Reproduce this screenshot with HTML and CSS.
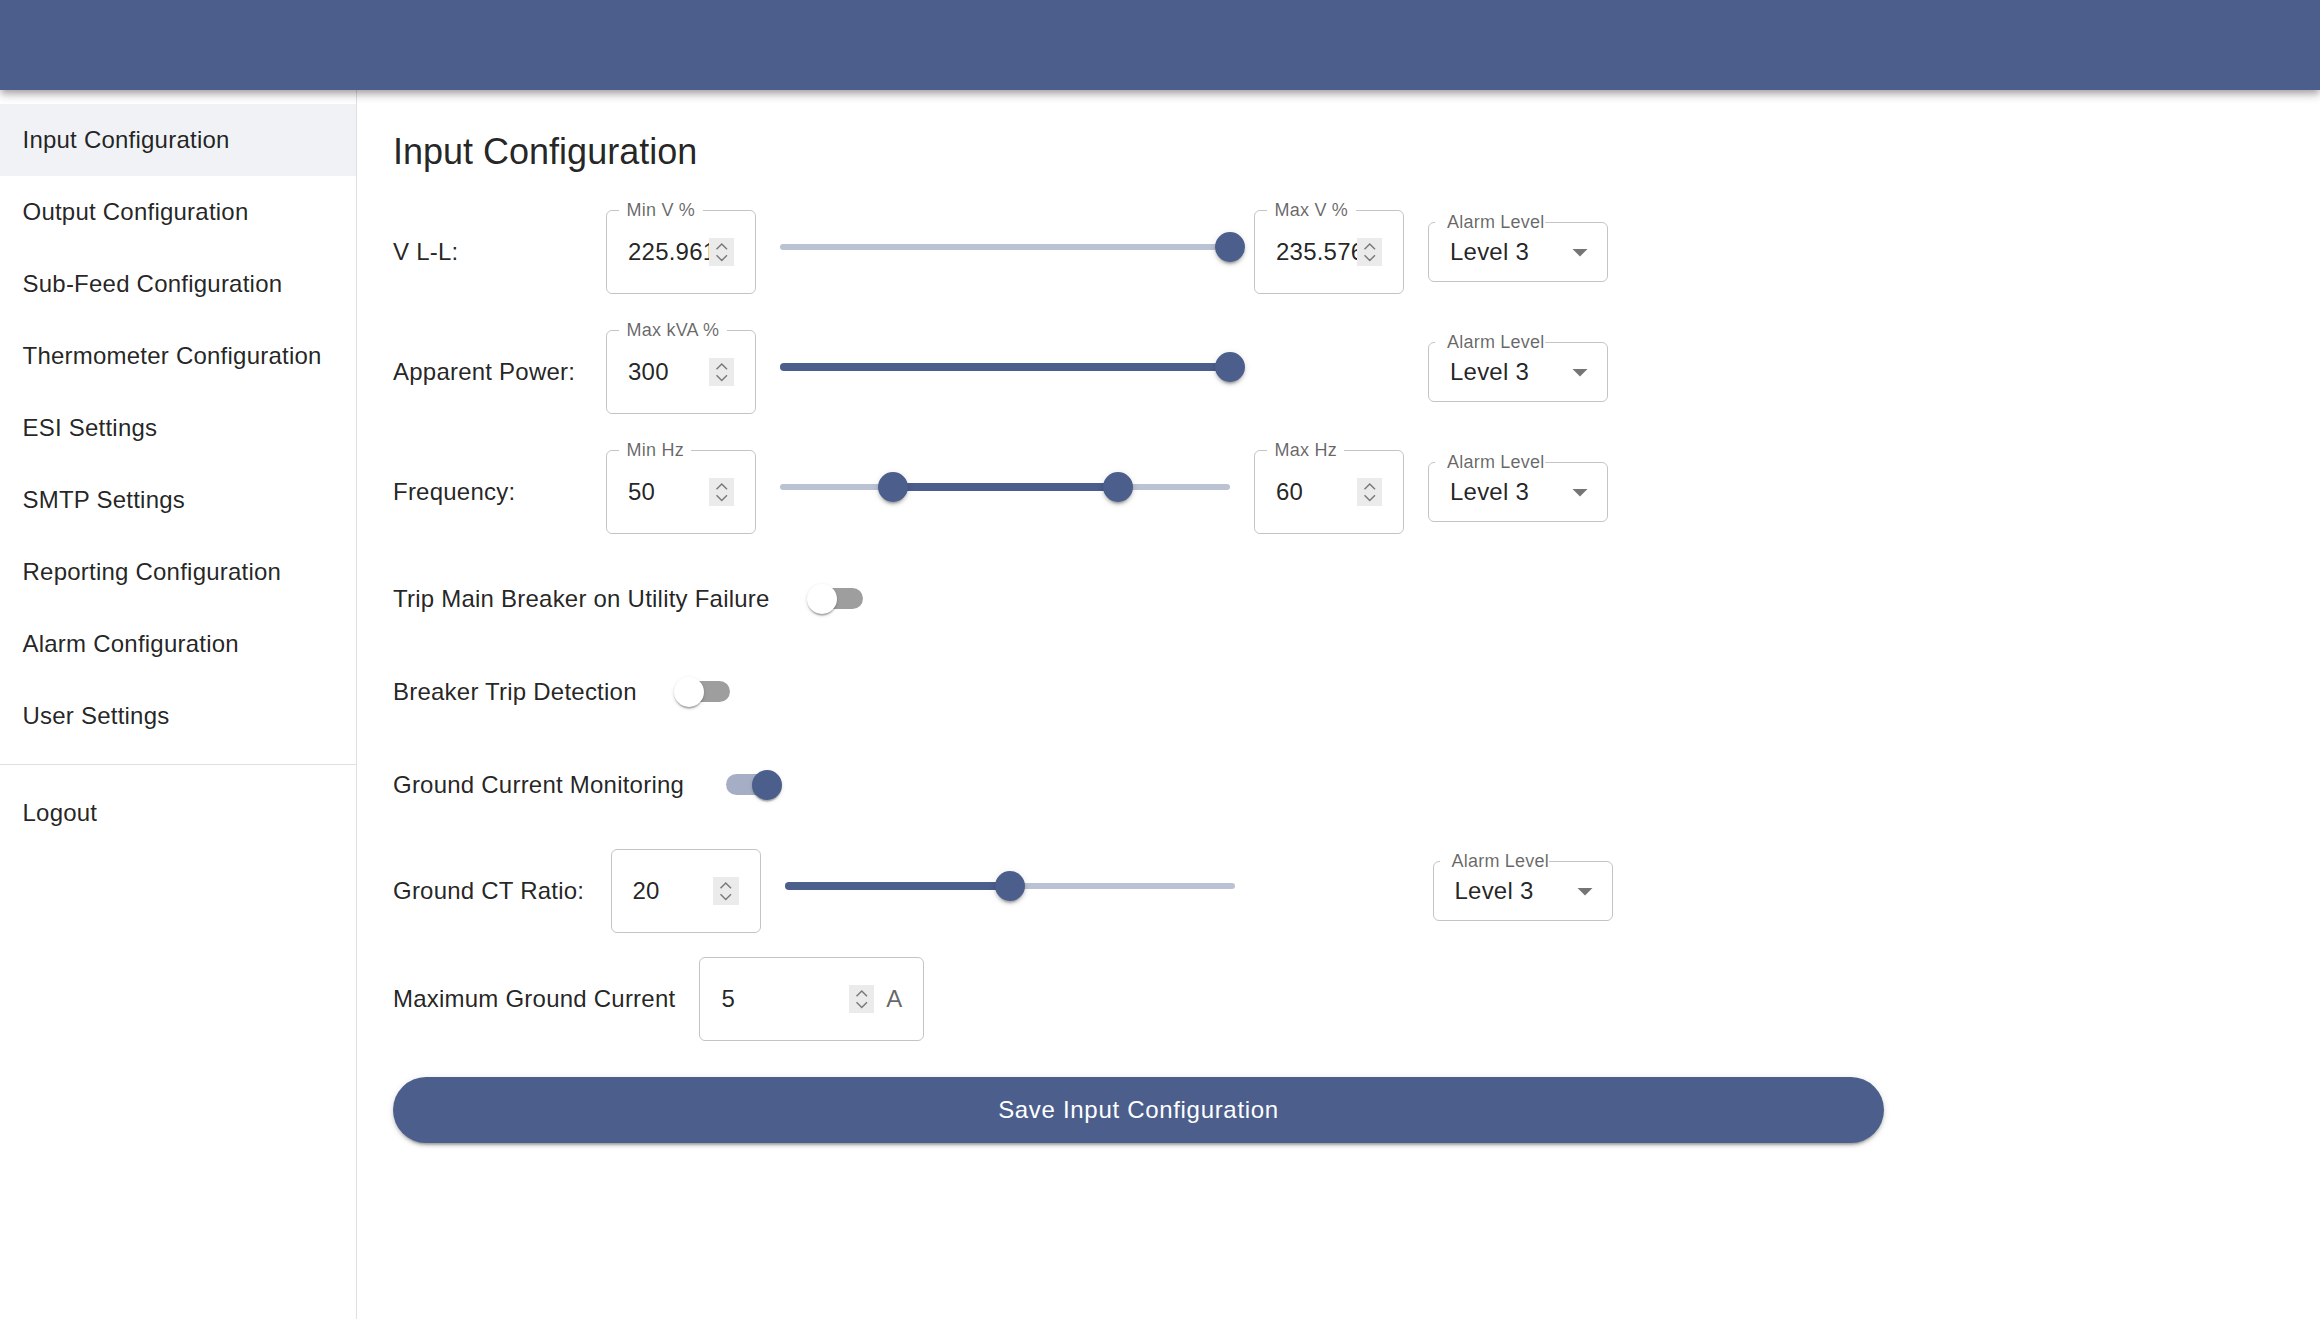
FILE: index.html
```html
<!DOCTYPE html>
<html lang="en">
<head>
<meta charset="utf-8">
<title>Input Configuration</title>
<link rel="stylesheet" href="styles.css">
</head>
<body>
<header class="appbar"></header>
<div class="layout">
  <nav class="sidebar">
    <ul class="nav-list">
      <li class="nav-item is-selected">Input Configuration</li>
      <li class="nav-item">Output Configuration</li>
      <li class="nav-item">Sub-Feed Configuration</li>
      <li class="nav-item">Thermometer Configuration</li>
      <li class="nav-item">ESI Settings</li>
      <li class="nav-item">SMTP Settings</li>
      <li class="nav-item">Reporting Configuration</li>
      <li class="nav-item">Alarm Configuration</li>
      <li class="nav-item">User Settings</li>
    </ul>
    <hr class="nav-divider">
    <ul class="nav-list">
      <li class="nav-item">Logout</li>
    </ul>
  </nav>
  <main class="content">
    <h1 class="page-title">Input Configuration</h1>
    <div class="form">

      <div class="slider-row">
        <span class="row-label">V L-L:</span>
        <div class="field">
          <span class="field-label">Min V %</span>
          <span class="field-value">225.96178</span>
          <span class="spinner"><svg viewBox="0 0 17 19" width="17" height="19"><path d="M5 7.5L8.5 4L12 7.5M5 11.5L8.5 15L12 11.5"/></svg></span>
        </div>
        <div class="slider">
          <span class="slider-rail"></span>
          <span class="slider-thumb" style="left:100%"></span>
        </div>
        <div class="field">
          <span class="field-label">Max V %</span>
          <span class="field-value">235.57643</span>
          <span class="spinner"><svg viewBox="0 0 17 19" width="17" height="19"><path d="M5 7.5L8.5 4L12 7.5M5 11.5L8.5 15L12 11.5"/></svg></span>
        </div>
        <div class="select">
          <span class="select-label">Alarm Level</span>
          <span class="select-value">Level 3</span>
          <svg class="select-arrow" viewBox="0 0 24 24"><path d="M7 10l5 5 5-5z"/></svg>
        </div>
      </div>

      <div class="slider-row">
        <span class="row-label">Apparent Power:</span>
        <div class="field">
          <span class="field-label">Max kVA %</span>
          <span class="field-value">300</span>
          <span class="spinner"><svg viewBox="0 0 17 19" width="17" height="19"><path d="M5 7.5L8.5 4L12 7.5M5 11.5L8.5 15L12 11.5"/></svg></span>
        </div>
        <div class="slider">
          <span class="slider-rail"></span>
          <span class="slider-track" style="left:0%;width:100%"></span>
          <span class="slider-thumb" style="left:100%"></span>
        </div>
        <div class="empty-slot"></div>
        <div class="select">
          <span class="select-label">Alarm Level</span>
          <span class="select-value">Level 3</span>
          <svg class="select-arrow" viewBox="0 0 24 24"><path d="M7 10l5 5 5-5z"/></svg>
        </div>
      </div>

      <div class="slider-row">
        <span class="row-label">Frequency:</span>
        <div class="field">
          <span class="field-label">Min Hz</span>
          <span class="field-value">50</span>
          <span class="spinner"><svg viewBox="0 0 17 19" width="17" height="19"><path d="M5 7.5L8.5 4L12 7.5M5 11.5L8.5 15L12 11.5"/></svg></span>
        </div>
        <div class="slider">
          <span class="slider-rail"></span>
          <span class="slider-track" style="left:25%;width:50%"></span>
          <span class="slider-thumb" style="left:25%"></span>
          <span class="slider-thumb" style="left:75%"></span>
        </div>
        <div class="field">
          <span class="field-label">Max Hz</span>
          <span class="field-value">60</span>
          <span class="spinner"><svg viewBox="0 0 17 19" width="17" height="19"><path d="M5 7.5L8.5 4L12 7.5M5 11.5L8.5 15L12 11.5"/></svg></span>
        </div>
        <div class="select">
          <span class="select-label">Alarm Level</span>
          <span class="select-value">Level 3</span>
          <svg class="select-arrow" viewBox="0 0 24 24"><path d="M7 10l5 5 5-5z"/></svg>
        </div>
      </div>

      <div class="switch-row">
        <span class="row-label">Trip Main Breaker on Utility Failure</span>
        <span class="switch"><span class="switch-track"></span><span class="switch-thumb"></span></span>
      </div>

      <div class="switch-row">
        <span class="row-label">Breaker Trip Detection</span>
        <span class="switch"><span class="switch-track"></span><span class="switch-thumb"></span></span>
      </div>

      <div class="switch-row">
        <span class="row-label">Ground Current Monitoring</span>
        <span class="switch is-on"><span class="switch-track"></span><span class="switch-thumb"></span></span>
      </div>

      <div class="ground-group">
        <div class="slider-row slider-row--wide">
          <span class="row-label">Ground CT Ratio:</span>
          <div class="field">
            <span class="field-value">20</span>
            <span class="spinner"><svg viewBox="0 0 17 19" width="17" height="19"><path d="M5 7.5L8.5 4L12 7.5M5 11.5L8.5 15L12 11.5"/></svg></span>
          </div>
          <div class="slider">
            <span class="slider-rail"></span>
            <span class="slider-track" style="left:0%;width:50%"></span>
            <span class="slider-thumb" style="left:50%"></span>
          </div>
          <div class="empty-slot"></div>
          <div class="select">
            <span class="select-label">Alarm Level</span>
            <span class="select-value">Level 3</span>
            <svg class="select-arrow" viewBox="0 0 24 24"><path d="M7 10l5 5 5-5z"/></svg>
          </div>
        </div>

        <div class="current-row">
          <span class="row-label">Maximum Ground Current</span>
          <div class="field field--wide">
            <span class="field-value">5</span>
            <span class="spinner"><svg viewBox="0 0 17 19" width="17" height="19"><path d="M5 7.5L8.5 4L12 7.5M5 11.5L8.5 15L12 11.5"/></svg></span>
            <span class="field-adornment">A</span>
          </div>
        </div>
      </div>

      <button class="save-button" type="button">Save Input Configuration</button>
    </div>
  </main>
</div>
</body>
</html>
```

FILE: styles.css
```css
html {
  zoom: 1.5;
}

body {
  margin: 0;
  font-family: "Liberation Sans", Arial, sans-serif;
  letter-spacing: 0.15px;
  color: rgba(0, 0, 0, 0.87);
  background: #ffffff;
  overflow: hidden;
}

.appbar {
  position: relative;
  z-index: 2;
  height: 60px;
  background: #4b5e8c;
  box-shadow: 0 2px 4px -1px rgba(0, 0, 0, 0.2), 0 4px 5px 0 rgba(0, 0, 0, 0.14), 0 1px 10px 0 rgba(0, 0, 0, 0.12);
}

.layout {
  display: flex;
  height: 820px;
}

.sidebar {
  width: 238px;
  flex: none;
  box-sizing: border-box;
  padding-top: 1px;
  border-right: 1px solid rgba(0, 0, 0, 0.12);
  background: #ffffff;
}

.nav-list {
  list-style: none;
  margin: 0;
  padding: 8px 0;
}

.nav-item {
  height: 48px;
  display: flex;
  align-items: center;
  padding: 0 16px 0 15px;
  font-size: 16px;
  line-height: 24px;
}

.nav-item.is-selected {
  background: rgba(75, 94, 140, 0.08);
}

.nav-divider {
  margin: 0;
  border: 0;
  border-top: 1px solid rgba(0, 0, 0, 0.12);
}

.content {
  flex: 1;
  min-width: 0;
  padding: 24px;
}

.page-title {
  margin: 1px 0 23px;
  font-size: 24px;
  font-weight: 400;
  line-height: 32px;
  letter-spacing: 0;
}

.form {
  display: flex;
  flex-direction: column;
  align-items: flex-start;
  gap: 24px;
}

.row-label {
  font-size: 16px;
  line-height: 24px;
  white-space: nowrap;
}

.slider-row {
  display: grid;
  grid-template-columns: 126px 100px 300px 100px 120px;
  column-gap: 16px;
  align-items: center;
  height: 56px;
}

.slider-row--wide {
  grid-template-columns: 129px 100px 300px 100px 120px;
}

.field {
  position: relative;
  box-sizing: border-box;
  height: 56px;
  border: 1px solid rgba(0, 0, 0, 0.23);
  border-radius: 4px;
  display: flex;
  align-items: center;
  padding: 0 14px;
  font-size: 16px;
}

.field--wide {
  width: 150px;
}

.field-label {
  position: absolute;
  top: -7px;
  left: 8px;
  padding: 0 5px;
  background: #ffffff;
  font-size: 12px;
  line-height: 12px;
  color: rgba(0, 0, 0, 0.6);
  white-space: nowrap;
}

.field-value {
  flex: 1;
  min-width: 0;
  overflow: hidden;
  white-space: nowrap;
}

.spinner {
  flex: none;
  width: 17px;
  height: 19px;
  display: flex;
  background: #ebebec;
}

.spinner path {
  fill: none;
  stroke: #7a7a7a;
  stroke-width: 1;
}

.field-adornment {
  flex: none;
  margin-left: 8px;
  color: rgba(0, 0, 0, 0.6);
}

.slider {
  position: relative;
  height: 30px;
  margin-bottom: 7px;
}

.slider-rail {
  position: absolute;
  left: 0;
  right: 0;
  top: 13px;
  height: 4px;
  border-radius: 2px;
  background: rgba(75, 94, 140, 0.38);
}

.slider-track {
  position: absolute;
  top: 12.5px;
  height: 5px;
  border-radius: 3px;
  background: #4b5e8c;
}

.slider-thumb {
  position: absolute;
  top: 15px;
  width: 20px;
  height: 20px;
  margin: -10px 0 0 -10px;
  border-radius: 50%;
  background: #4b5e8c;
  box-shadow: 0 3px 1px -2px rgba(0, 0, 0, 0.2), 0 2px 2px 0 rgba(0, 0, 0, 0.14), 0 1px 5px 0 rgba(0, 0, 0, 0.12);
}

.select {
  position: relative;
  box-sizing: border-box;
  height: 40px;
  border: 1px solid rgba(0, 0, 0, 0.23);
  border-radius: 4px;
  display: flex;
  align-items: center;
  padding: 0 6px 0 14px;
  font-size: 16px;
}

.select-label {
  position: absolute;
  top: -7px;
  left: 4px;
  padding-left: 8px;
  background: #ffffff;
  font-size: 12px;
  line-height: 12px;
  color: rgba(0, 0, 0, 0.6);
  white-space: nowrap;
}

.select-value {
  flex: 1;
}

.select-arrow {
  width: 24px;
  height: 24px;
  fill: rgba(0, 0, 0, 0.54);
}

.switch-row {
  display: flex;
  align-items: center;
  gap: 16px;
  height: 38px;
}

.switch {
  position: relative;
  flex: none;
  width: 58px;
  height: 38px;
}

.switch-track {
  position: absolute;
  left: 12px;
  top: 12px;
  width: 34px;
  height: 14px;
  border-radius: 7px;
  background: rgba(0, 0, 0, 0.38);
}

.switch-thumb {
  position: absolute;
  left: 9px;
  top: 9px;
  width: 20px;
  height: 20px;
  border-radius: 50%;
  background: #ffffff;
  box-shadow: 0 2px 1px -1px rgba(0, 0, 0, 0.2), 0 1px 1px 0 rgba(0, 0, 0, 0.14), 0 1px 3px 0 rgba(0, 0, 0, 0.12);
}

.switch.is-on .switch-track {
  background: rgba(75, 94, 140, 0.5);
}

.switch.is-on .switch-thumb {
  transform: translateX(20px);
  background: #4b5e8c;
}

.ground-group {
  display: flex;
  flex-direction: column;
  gap: 16px;
}

.current-row {
  display: flex;
  align-items: center;
  gap: 16px;
  height: 56px;
}

.save-button {
  width: 994px;
  height: 44px;
  border: 0;
  border-radius: 22px;
  background: #4b5e8c;
  color: #ffffff;
  font-family: "Liberation Sans", Arial, sans-serif;
  font-size: 16px;
  letter-spacing: 0.46px;
  box-shadow: 0 3px 1px -2px rgba(0, 0, 0, 0.2), 0 2px 2px 0 rgba(0, 0, 0, 0.14), 0 1px 5px 0 rgba(0, 0, 0, 0.12);
}
```
